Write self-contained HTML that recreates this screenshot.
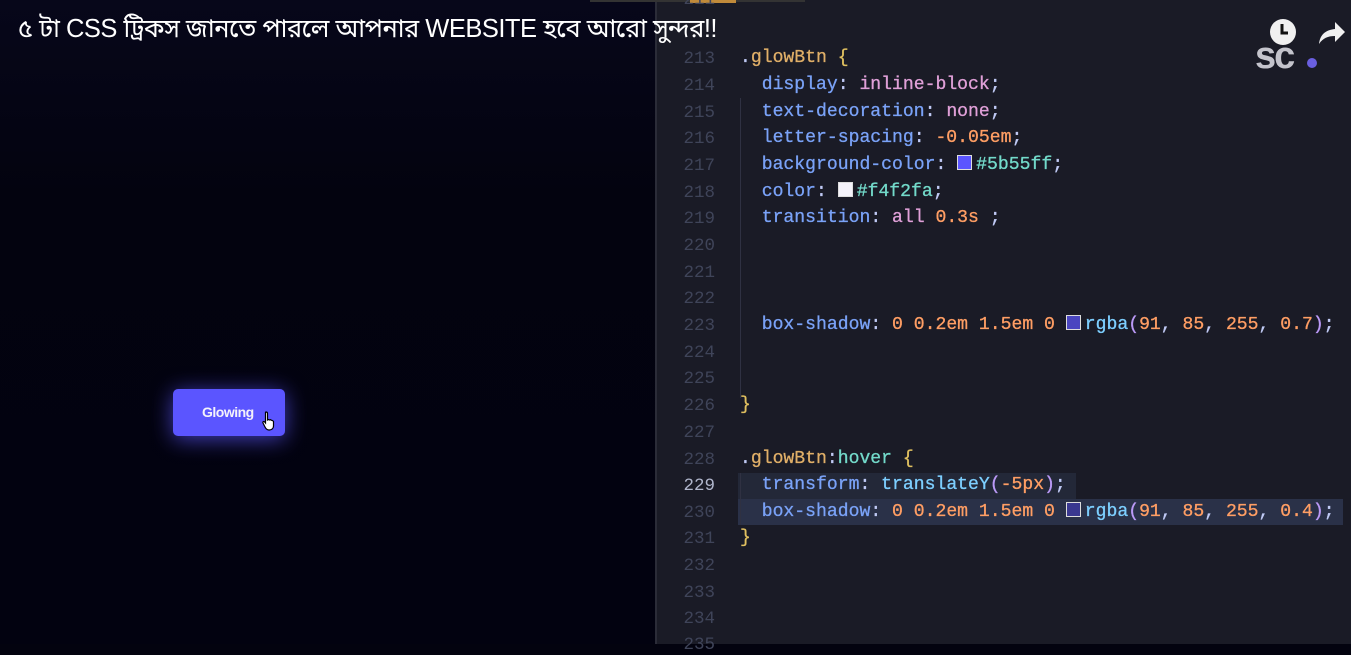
<!DOCTYPE html>
<html><head><meta charset="utf-8"><style>
html,body{margin:0;padding:0;width:1351px;height:644px;overflow:hidden;background:#03030f;}
.left{position:absolute;left:0;top:0;width:655px;height:644px;background:linear-gradient(#07071a,#03030f 30%,#020210);}
.title{position:absolute;left:18px;top:15px;color:#fff;font:25.5px "Liberation Sans","Noto Sans Bengali","Lohit Bengali",sans-serif;letter-spacing:-0.5px;white-space:nowrap;z-index:3;}
.btn{position:absolute;left:173px;top:389px;width:112px;height:47px;background:#5b55ff;border-radius:5px;box-shadow:0 3px 22px rgba(91,85,255,0.7);color:#f4f2fa;font:bold 14px "Liberation Sans",sans-serif;letter-spacing:-0.5px;line-height:47px;text-indent:29px;}
.editor{position:absolute;left:655px;top:0;width:696px;height:644px;background:#1a1b26;border-left:2px solid #2b2c38;}
.topbar{position:absolute;left:590px;top:0;width:215px;height:2px;background:#333;}
.topbar2{position:absolute;left:690px;top:0;width:46px;height:3px;background:#c08a3a;}
.ln{position:absolute;left:660px;width:55px;text-align:right;color:#3f4459;font:17.5px "Liberation Mono",monospace;}
.ln.cur{color:#b0b6cc;}
.code{position:absolute;left:740px;white-space:pre;font:18.1px "Liberation Mono",monospace;color:#c0caf5;-webkit-text-stroke:0.3px currentColor;}
.p{color:#7aa2f7}.v{color:#e0a0d8}.n{color:#ff9e64}.y{color:#e0c060}.s{color:#bb9af7}.t{color:#73daca}.c{color:#c0caf5}.g{color:#e0af68}.h{color:#7dcfff}
.sw{display:inline-block;width:15px;height:15px;border:1.5px solid #ddd;vertical-align:-1px;margin-right:4px;box-sizing:border-box}
.guide{position:absolute;left:740px;width:1px;background:#2f3142;}
.sel{position:absolute;left:738px;top:499px;width:605px;height:26px;background:#2a3148;}
.sel2{position:absolute;left:738px;top:473px;width:338px;height:26px;background:#232838;}
</style></head><body>
<div class="left"></div>
<div class="title">৫ টা CSS ট্রিকস জানতে পারলে আপনার WEBSITE হবে আরো সুন্দর!!</div>
<div class="btn">Glowing<svg style="position:absolute;left:89px;top:22px" width="16" height="20" viewBox="0 0 16 20"><path d="M4 1c1 0 1.5.6 1.5 1.5V9l1-.5 1 .5 1-.3 1 .6 1 .2 1 1V15c0 2-1.5 4-4 4H7c-2 0-3-1-4-3L1 12c-.5-1 .5-2 1.5-1.2l1 1.2V2.5C3.5 1.6 3.3 1 4 1z" fill="#fff" stroke="#000" stroke-width="1.2"/></svg></div>
<div class="editor"></div>
<div class="topbar"></div><div class="topbar2"></div>
<div class="sel2"></div><div class="sel"></div>
<div class="guide" style="top:98px;height:300px"></div>
<div class="guide" style="top:473px;height:52px"></div>
<div class="ln" style="top:-10px">211</div>
<div class="ln" style="top:49px">213</div>
<div class="ln" style="top:76px">214</div>
<div class="ln" style="top:103px">215</div>
<div class="ln" style="top:129px">216</div>
<div class="ln" style="top:156px">217</div>
<div class="ln" style="top:183px">218</div>
<div class="ln" style="top:209px">219</div>
<div class="ln" style="top:236px">220</div>
<div class="ln" style="top:263px">221</div>
<div class="ln" style="top:289px">222</div>
<div class="ln" style="top:316px">223</div>
<div class="ln" style="top:343px">224</div>
<div class="ln" style="top:369px">225</div>
<div class="ln" style="top:396px">226</div>
<div class="ln" style="top:423px">227</div>
<div class="ln" style="top:450px">228</div>
<div class="ln cur" style="top:476px">229</div>
<div class="ln" style="top:503px">230</div>
<div class="ln" style="top:529px">231</div>
<div class="ln" style="top:556px">232</div>
<div class="ln" style="top:583px">233</div>
<div class="ln" style="top:609px">234</div>
<div class="ln" style="top:635px">235</div>
<div class="code" style="top:48px"><span class="c">.</span><span class="g">glowBtn</span> <span class="y">{</span></div>
<div class="code" style="top:75px">  <span class="p">display</span>: <span class="v">inline-block</span>;</div>
<div class="code" style="top:102px">  <span class="p">text-decoration</span>: <span class="v">none</span>;</div>
<div class="code" style="top:128px">  <span class="p">letter-spacing</span>: <span class="n">-0.05em</span>;</div>
<div class="code" style="top:155px">  <span class="p">background-color</span>: <span class="sw" style="background:#5b55ff"></span><span class="t">#5b55ff</span>;</div>
<div class="code" style="top:182px">  <span class="p">color</span>: <span class="sw" style="background:#f4f2fa"></span><span class="t">#f4f2fa</span>;</div>
<div class="code" style="top:208px">  <span class="p">transition</span>: <span class="v">all</span> <span class="n">0.3s</span> ;</div>
<div class="code" style="top:315px">  <span class="p">box-shadow</span>: <span class="n">0 0.2em 1.5em 0</span> <span class="sw" style="background:#4a46c0"></span><span class="h">rgba</span><span class="s">(</span><span class="n">91</span>, <span class="n">85</span>, <span class="n">255</span>, <span class="n">0.7</span><span class="s">)</span>;</div>
<div class="code" style="top:395px"><span class="y">}</span></div>
<div class="code" style="top:449px"><span class="c">.</span><span class="g">glowBtn</span>:<span class="t">hover</span> <span class="y">{</span></div>
<div class="code" style="top:475px">  <span class="p">transform</span>: <span class="h">translateY</span><span class="s">(</span><span class="n">-5px</span><span class="s">)</span>;</div>
<div class="code" style="top:502px">  <span class="p">box-shadow</span>: <span class="n">0 0.2em 1.5em 0</span> <span class="sw" style="background:#3a3890"></span><span class="h">rgba</span><span class="s">(</span><span class="n">91</span>, <span class="n">85</span>, <span class="n">255</span>, <span class="n">0.4</span><span class="s">)</span>;</div>
<div class="code" style="top:528px"><span class="y">}</span></div>
<svg style="position:absolute;left:1255px;top:17px" width="65" height="55" viewBox="0 0 65 55">
<text x="0" y="51" font-family="Liberation Sans" font-weight="bold" font-size="38" fill="#c4c4cc" letter-spacing="-2">sc</text>
<circle cx="57" cy="46" r="5" fill="#6a5fe0"/>
<circle cx="28" cy="15" r="13" fill="#f0f0f0"/>
<path d="M27 7v9h6" stroke="#111" stroke-width="3" fill="none"/>
</svg>
<svg style="position:absolute;left:1318px;top:20px" width="28" height="26" viewBox="0 0 28 26"><path d="M17 2l10 10-10 10v-6C10 16 5 18 1 24c1-9 6-14 16-15z" fill="#f0f0f0"/></svg>
</body></html>
